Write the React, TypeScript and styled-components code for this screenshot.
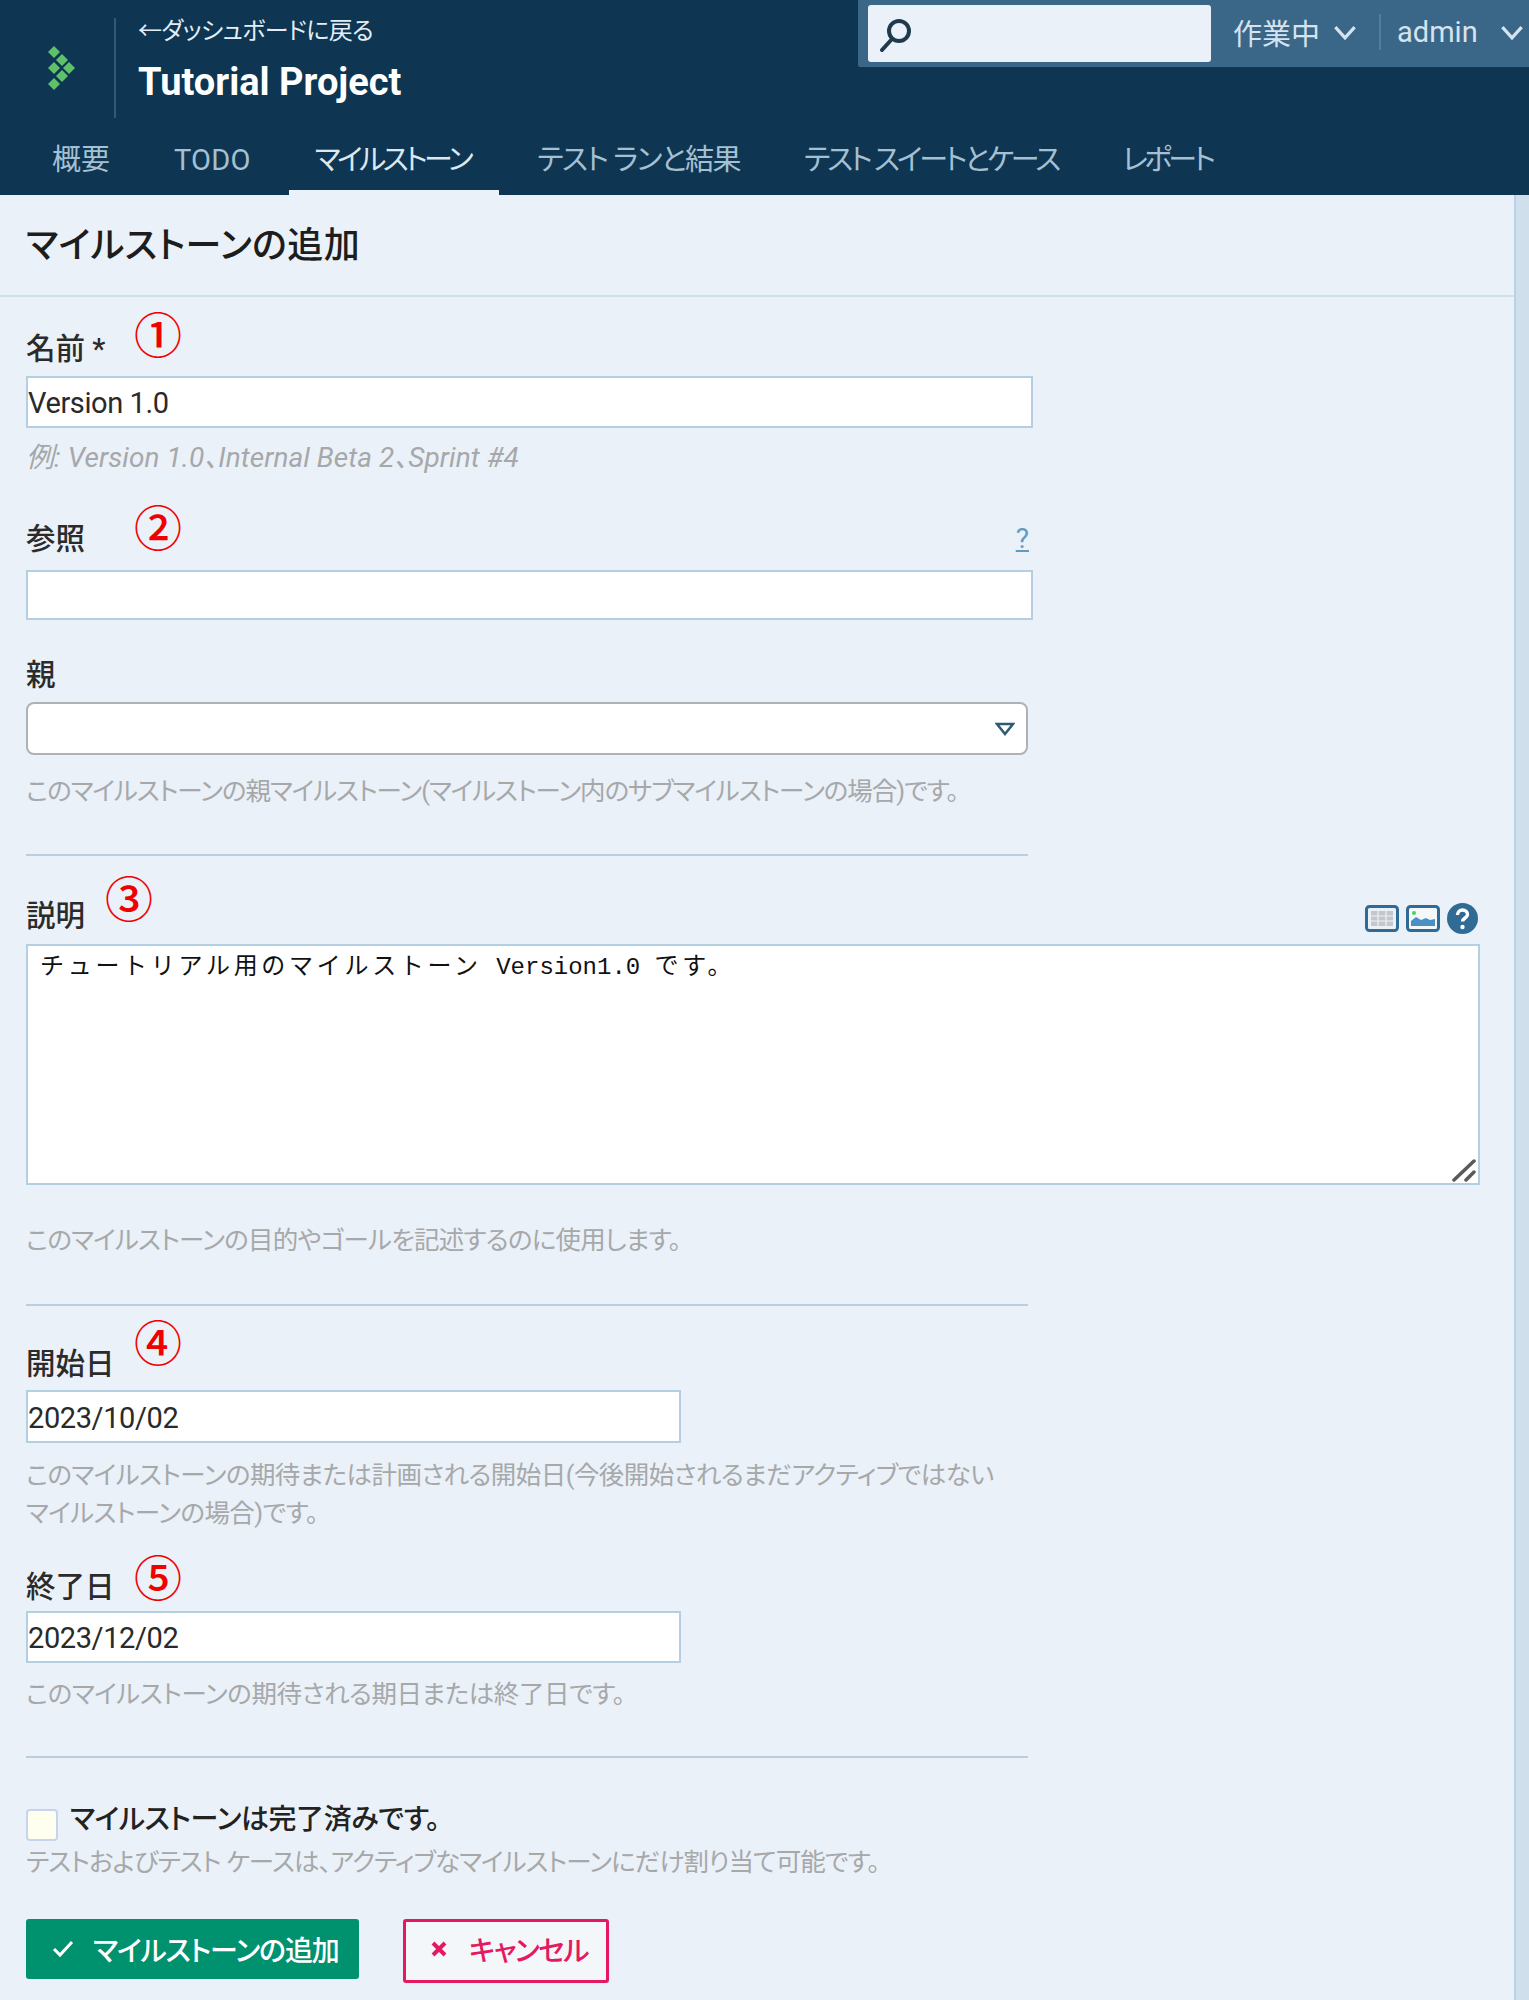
import React from 'react';
import styled, { createGlobalStyle } from 'styled-components';

const GlobalStyle = createGlobalStyle`
  html, body {
    margin: 0;
    padding: 0;
    background: #eaf1f8;
  }
  body {
    font-family: Roboto, "Noto Sans CJK JP", sans-serif;
    font-feature-settings: "palt";
    color: #222;
  }
`;

const Page = styled.div`
  width: 1529px;
  height: 2000px;
  overflow: hidden;
  display: flex;
  flex-direction: column;
`;

const Header = styled.header`
  height: 195px;
  background: #0e3551;
  display: flex;
  flex-direction: column;
  flex: none;
`;

const TopRow = styled.div`
  height: 125px;
  display: flex;
  align-items: flex-start;
  justify-content: space-between;
`;

const Brand = styled.div`
  display: flex;
  align-items: flex-start;
  padding: 18px 0 0 46px;
`;

const LogoMark = styled.svg`
  width: 32px;
  height: 50px;
  margin-top: 28px;
`;

const BrandRule = styled.div`
  width: 2px;
  height: 100px;
  background: #2f5a7a;
  margin: 0 22px 0 36px;
`;

const BrandText = styled.div`
  display: flex;
  flex-direction: column;
`;

const BackLink = styled.a`
  font-size: 24px;
  line-height: 26px;
  height: 26px;
  color: #e4edf4;
  letter-spacing: -0.6px;
`;

const ProjectName = styled.div`
  font-size: 38px;
  line-height: 44px;
  margin-top: 16px;
  font-weight: 700;
  color: #fff;
`;

const StatusBar = styled.div`
  width: 671px;
  height: 67px;
  box-sizing: border-box;
  background: #3a6788;
  border-bottom-left-radius: 2px;
  display: flex;
  align-items: flex-start;
  padding: 5px 0 0 10px;
`;

const SearchBox = styled.div`
  width: 343px;
  height: 57px;
  box-sizing: border-box;
  background: #eaf1f8;
  border-radius: 3px;
  padding: 13px 0 0 10px;
  margin-right: 22px;
`;

const BarItem = styled.div`
  display: flex;
  align-items: center;
  height: 54px;
  font-size: 29px;
  color: #d5e3ee;
`;

const BarRule = styled.div`
  width: 2px;
  height: 36px;
  margin: 9px 16px 0 22px;
  background: #517c9c;
`;

const Chevron = styled.svg`
  width: 24px;
  height: 15px;
  margin-left: ${p => p.$gap}px;
`;

const Nav = styled.nav`
  height: 70px;
  display: flex;
  padding-left: 20px;
`;

const Tab = styled.a`
  padding: 17px ${p => (p.$active ? 29 : 32)}px 0 ${p => (p.$active ? 26 : 32)}px;
  margin: 0 ${p => (p.$active ? 6 : 0)}px;
  height: 70px;
  box-sizing: border-box;
  font-size: 29px;
  line-height: 36px;
  letter-spacing: ${p => p.$spacing ?? 0}px;
  color: ${p => (p.$active ? '#dce8f0' : '#a5c0d2')};
  border-bottom: 5px solid ${p => (p.$active ? '#eaf1f8' : 'transparent')};
`;

const Body = styled.div`
  flex: 1;
  display: flex;
`;

const Main = styled.main`
  flex: 1;
`;

const Gutter = styled.div`
  width: 15px;
  flex: none;
  box-sizing: border-box;
  background: #cfe0ec;
  border-left: 2px solid #b9d2e4;
`;

const TitleBar = styled.div`
  height: 102px;
  box-sizing: border-box;
  border-bottom: 2px solid #d0e0e8;
  padding: 28px 0 0 26px;
`;

const Title = styled.h1`
  margin: 0;
  font-size: 36px;
  line-height: 46px;
  font-weight: 500;
  letter-spacing: 0.4px;
  color: #1d1d1d;
`;

const Form = styled.form`
  padding-left: 26px;
`;

const LabelRow = styled.div`
  position: relative;
  display: flex;
  justify-content: space-between;
  align-items: center;
  width: ${p => p.$width || 1007}px;
  height: 36px;
  margin-top: ${p => p.$top}px;
`;

const Label = styled.label`
  font-size: 29.5px;
  line-height: 36px;
  margin-top: 3px;
  font-weight: 500;
  color: #2b2b2b;
`;

const Marker = styled.span`
  position: absolute;
  left: ${p => p.$left}px;
  top: ${p => p.$top}px;
  font-family: "Noto Sans CJK JP", sans-serif;
  font-size: 48px;
  line-height: 48px;
  font-weight: 500;
  color: #f00000;
`;

const HelpLink = styled.a`
  font-size: 28px;
  line-height: 36px;
  color: #5f9cc5;
  text-decoration: underline;
  margin: 4px 4px 0 0;
`;

const TextField = styled.input`
  display: block;
  box-sizing: border-box;
  width: ${p => p.$width}px;
  height: ${p => p.$height}px;
  margin-top: ${p => p.$top}px;
  padding: 2px 0 0 0;
  background: #fff;
  border: 2px solid #b5cfe2;
  border-radius: 0;
  outline: none;
  font-family: Roboto, sans-serif;
  font-size: 29px;
  letter-spacing: -0.4px;
  color: #2a2a2a;
`;

const SelectBox = styled.div`
  position: relative;
  box-sizing: border-box;
  width: 1002px;
  height: 53px;
  margin-top: 11px;
  background: #fff;
  border: 2px solid #aeb2b5;
  border-radius: 8px;
`;

const SelectArrow = styled.svg`
  position: absolute;
  right: 11px;
  top: 18px;
  width: 20px;
  height: 14px;
`;

const Hint = styled.p`
  margin: ${p => p.$top + 2}px 0 -2px;
  width: 1010px;
  font-size: ${p => (p.$italic ? 28 : 25.5)}px;
  line-height: 38px;
  font-style: ${p => (p.$italic ? 'italic' : 'normal')};
  color: #a6a8aa;
  letter-spacing: ${p => p.$spacing ?? -0.55}px;
`;

const Rule = styled.hr`
  margin: ${p => p.$top}px 0 0;
  width: 1002px;
  height: 2px;
  border: 0;
  background: #b7cfe1;
`;

const Tools = styled.div`
  position: absolute;
  right: 2px;
  top: 7px;
  display: flex;
  align-items: center;
  gap: 7px;
`;

const ToolIcon = styled.svg`
  display: block;
  width: ${p => p.$size}px;
  height: ${p => (p.$size === 31 ? 31 : 27)}px;
`;

const TextBlock = styled.div`
  position: relative;
  box-sizing: border-box;
  width: 1454px;
  height: 241px;
  margin-top: 12px;
  padding: 3px 0 0 12px;
  background: #fff;
  border: 2px solid #b5cfe2;
  font-family: "Liberation Mono", "Noto Sans CJK JP", monospace;
  font-size: 24px;
  line-height: 30px;
  font-feature-settings: normal;
  color: #111;
`;

const Wide = styled.span`
  font-family: "Noto Sans CJK JP", monospace;
  letter-spacing: 3.7px;
`;

const ResizeGrip = styled.svg`
  position: absolute;
  right: 1px;
  bottom: 1px;
  width: 26px;
  height: 26px;
`;

const CheckRow = styled.div`
  display: flex;
  align-items: flex-start;
  margin-top: 46px;
`;

const CheckBox = styled.input`
  appearance: none;
  box-sizing: border-box;
  width: 32px;
  height: 32px;
  margin: 5px 12px 0 0;
  background: #fffff0;
  border: 2px solid #c6d4ee;
  border-radius: 4px;
`;

const CheckLabel = styled.label`
  font-size: 28px;
  line-height: 36px;
  margin-top: -2px;
  font-weight: 500;
  letter-spacing: -0.4px;
  color: #222;
`;

const Actions = styled.div`
  display: flex;
  align-items: flex-start;
  gap: 44px;
  margin-top: 40px;
`;

const SaveButton = styled.button`
  display: flex;
  align-items: center;
  gap: 19px;
  box-sizing: border-box;
  width: 333px;
  height: 60px;
  padding: 0 0 0 26px;
  background: #00916e;
  border: 0;
  border-radius: 3px;
  font-family: inherit;
  font-feature-settings: inherit;
  font-size: 28px;
  font-weight: 500;
  letter-spacing: -1.1px;
  color: #fff;
`;

const CancelButton = styled.button`
  display: flex;
  align-items: center;
  gap: 21px;
  box-sizing: border-box;
  width: 206px;
  height: 64px;
  padding: 0 0 4px 24px;
  background: #f4f7fa;
  border: 3px solid #e5195f;
  border-radius: 3px;
  font-family: inherit;
  font-feature-settings: inherit;
  font-size: 28px;
  font-weight: 500;
  letter-spacing: -1.6px;
  color: #e5195f;
`;

const diamonds = [
  [8, 6],
  [16, 14],
  [23, 22],
  [8, 22],
  [16, 30],
  [8, 38],
];

const ChevronIcon = ({ gap }: { gap: number }) => (
  <Chevron $gap={gap} viewBox="0 0 22 14">
    <polyline points="2,2 11,12 20,2" fill="none" stroke="#d5e3ee" strokeWidth="3" />
  </Chevron>
);

export default function App() {
  return (
    <Page>
      <GlobalStyle />
      <Header>
        <TopRow>
          <Brand>
            <LogoMark viewBox="0 0 32 50">
              {diamonds.map(([x, y]) => (
                <polygon
                  key={`${x}-${y}`}
                  points={`${x},${y - 6} ${x + 6},${y} ${x},${y + 6} ${x - 6},${y}`}
                  fill="#5fc16a"
                />
              ))}
            </LogoMark>
            <BrandRule />
            <BrandText>
              <BackLink>←ダッシュボードに戻る</BackLink>
              <ProjectName>Tutorial Project</ProjectName>
            </BrandText>
          </Brand>
          <StatusBar>
            <SearchBox>
              <svg width="36" height="34" viewBox="0 0 36 34">
                <circle cx="21" cy="13" r="10" fill="none" stroke="#1f3a4d" strokeWidth="4" />
                <line x1="14" y1="21" x2="4" y2="32" stroke="#1f3a4d" strokeWidth="4" strokeLinecap="round" />
              </svg>
            </SearchBox>
            <BarItem>
              作業中
              <ChevronIcon gap={13} />
            </BarItem>
            <BarRule />
            <BarItem>
              admin
              <ChevronIcon gap={22} />
            </BarItem>
          </StatusBar>
        </TopRow>
        <Nav>
          <Tab>概要</Tab>
          <Tab $spacing={0.2}>TODO</Tab>
          <Tab $active $spacing={-3.5}>マイルストーン</Tab>
          <Tab $spacing={-1.5}>テスト ランと結果</Tab>
          <Tab $spacing={-3}>テスト スイートとケース</Tab>
          <Tab $spacing={-3.6}>レポート</Tab>
        </Nav>
      </Header>
      <Body>
        <Main>
          <TitleBar>
            <Title>マイルストーンの追加</Title>
          </TitleBar>
          <Form>
            <LabelRow $top={32}>
              <Label>名前 *</Label>
              <Marker $left={108} $top={-21}>①</Marker>
            </LabelRow>
            <TextField $width={1007} $height={52} $top={11} defaultValue="Version 1.0" />
            <Hint $top={9} $italic $spacing={0.05}>例: Version 1.0、Internal Beta 2、Sprint #4</Hint>

            <LabelRow $top={44}>
              <Label>参照</Label>
              <Marker $left={108} $top={-18}>②</Marker>
              <HelpLink>?</HelpLink>
            </LabelRow>
            <TextField $width={1007} $height={50} $top={15} />

            <LabelRow $top={35}>
              <Label>親</Label>
            </LabelRow>
            <SelectBox>
              <SelectArrow viewBox="0 0 20 14">
                <polygon points="2,2 18,2 10,12" fill="none" stroke="#2f5a70" strokeWidth="2.5" />
              </SelectArrow>
            </SelectBox>
            <Hint $top={15} $spacing={-1}>このマイルストーンの親マイルストーン(マイルストーン内のサブマイルストーンの場合)です。</Hint>
            <Rule $top={46} />

            <LabelRow $top={40} $width={1454}>
              <Label>説明</Label>
              <Marker $left={79} $top={-24}>③</Marker>
              <Tools>
                <ToolIcon $size={34} viewBox="0 0 34 27">
                  <rect x="1.5" y="1.5" width="31" height="24" rx="3" fill="#eaf1f8" stroke="#2f6b95" strokeWidth="3" />
                  <rect x="6" y="6" width="22" height="15" fill="#c4c8cc" />
                  <path d="M6 11h22M6 16h22M13 6v15M21 6v15" stroke="#eef1f3" strokeWidth="1.2" />
                </ToolIcon>
                <ToolIcon $size={34} viewBox="0 0 34 27">
                  <rect x="1.5" y="1.5" width="31" height="24" rx="3" fill="#f4f8fb" stroke="#2f6b95" strokeWidth="3" />
                  <path d="M5 21v-5l5-4 5 3 5-2 4 2 5-1v7z" fill="#4a90c4" />
                  <circle cx="8" cy="8" r="2" fill="#4ccf5c" />
                </ToolIcon>
                <ToolIcon $size={31} viewBox="0 0 31 31">
                  <circle cx="15.5" cy="15.5" r="15.5" fill="#2f6b95" />
                  <path d="M10.5 12c0-3 2.200-5 5-5s5 2 5 4.500c0 3.500-5 3.500-5 7" fill="none" stroke="#fff" strokeWidth="3.400" />
                  <circle cx="15.500" cy="24" r="2.200" fill="#fff" />
                </ToolIcon>
              </Tools>
            </LabelRow>
            <TextBlock>
              <Wide>チュートリアル用のマイルストーン</Wide> Version1.0 <Wide>です。</Wide>
              <ResizeGrip viewBox="0 0 26 26">
                <path d="M3 24L23 5M15 24l8-8" stroke="#5a5a5a" strokeWidth="3.5" strokeLinecap="round" />
              </ResizeGrip>
            </TextBlock>
            <Hint $top={34} $spacing={-0.75}>このマイルストーンの目的やゴールを記述するのに使用します。</Hint>
            <Rule $top={47} />

            <LabelRow $top={38}>
              <Label>開始日</Label>
              <Marker $left={108} $top={-28}>④</Marker>
            </LabelRow>
            <TextField $width={655} $height={53} $top={10} defaultValue="2023/10/02" />
            <Hint $top={11}>
              このマイルストーンの期待または計画される開始日(今後開始されるまだアクティブではない
              <br />
              マイルストーンの場合)です。
            </Hint>

            <LabelRow $top={37}>
              <Label>終了日</Label>
              <Marker $left={108} $top={-16}>⑤</Marker>
            </LabelRow>
            <TextField $width={655} $height={52} $top={8} defaultValue="2023/12/02" />
            <Hint $top={10} $spacing={-0.4}>このマイルストーンの期待される期日または終了日です。</Hint>
            <Rule $top={45} />

            <CheckRow>
              <CheckBox type="checkbox" />
              <CheckLabel>マイルストーンは完了済みです。</CheckLabel>
            </CheckRow>
            <Hint $top={0} $spacing={-0.9}>テストおよびテスト ケースは、アクティブなマイルストーンにだけ割り当て可能です。</Hint>

            <Actions>
              <SaveButton type="button">
                <svg width="22" height="18" viewBox="0 0 22 18">
                  <polyline points="2,9 8,15 20,2" fill="none" stroke="#fff" strokeWidth="3" />
                </svg>
                マイルストーンの追加
              </SaveButton>
              <CancelButton type="button">
                <svg width="18" height="18" viewBox="0 0 18 18">
                  <path d="M3 3l12 12M15 3L3 15" stroke="#e5195f" strokeWidth="4" />
                </svg>
                キャンセル
              </CancelButton>
            </Actions>
          </Form>
        </Main>
        <Gutter />
      </Body>
    </Page>
  );
}
